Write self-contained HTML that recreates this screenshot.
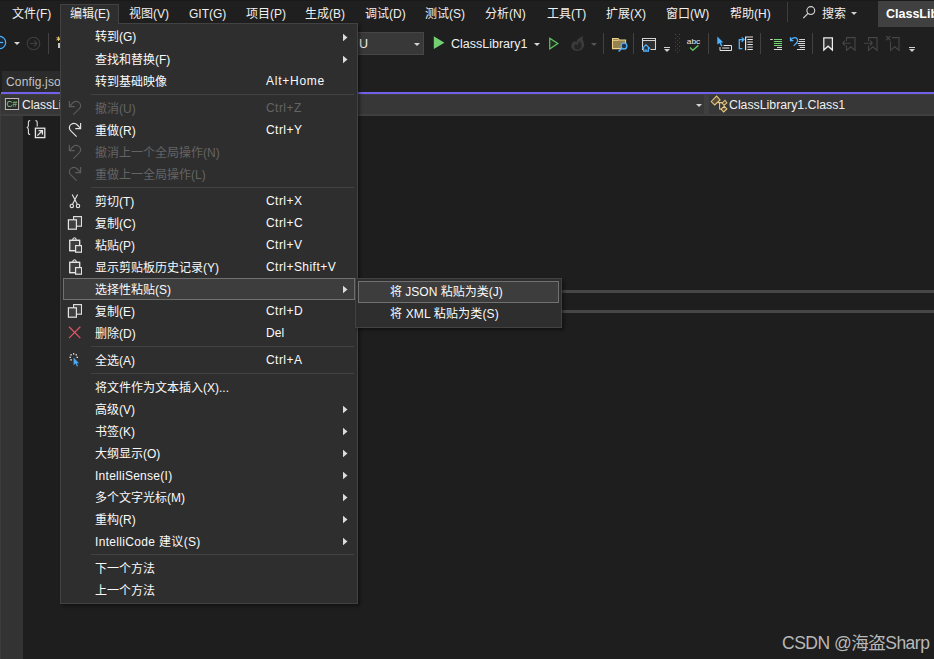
<!DOCTYPE html>
<html lang="zh-CN">
<head>
<meta charset="utf-8">
<title>Visual Studio</title>
<style>
html,body{margin:0;padding:0;}
body{width:934px;height:659px;overflow:hidden;background:#1f1f1f;position:relative;
  font-family:"Liberation Sans","Noto Sans CJK SC",sans-serif;font-size:12px;color:#fafafa;}
.abs{position:absolute;}
.t{position:absolute;white-space:nowrap;line-height:16px;height:16px;}
/* menubar */
.mb{top:6px;color:#f0f0f0;}
/* popup menu */
.popup{position:absolute;background:#2e2e2e;border:1px solid #424242;box-sizing:border-box;
  box-shadow:2px 2px 3px rgba(0,0,0,.42);}
.row{position:absolute;left:2px;height:22px;box-sizing:border-box;}
.row .lbl{position:absolute;left:32px;top:4px;line-height:16px;white-space:nowrap;}
.row .sc{position:absolute;left:203px;top:3px;line-height:16px;white-space:nowrap;letter-spacing:0.45px;}
.row .ar{position:absolute;left:280px;top:7px;width:5px;height:9px;background:#dcdcdc;
  clip-path:polygon(0 7.5%,90% 50%,0 92.5%);}
.row.dis{color:#646464;}
.row .ico{color:#e4e4e4;}
.row.dis .ico{color:#5c5c5c;}
.row.hot{background:#3d3d3d;border:1px solid #707070;}
.row.hot .lbl{left:31px;top:3px;}
.row.hot .ar{left:279px;top:6px;}
.sep{position:absolute;left:30px;right:3px;height:1px;background:#424242;}
.ico{position:absolute;left:3px;top:3px;width:16px;height:16px;}
.vsep{position:absolute;width:1px;background:#424242;top:33px;height:21px;}
</style>
</head>
<body>
<!-- ===== menu bar ===== -->
<div id="menubar" class="abs" style="left:0;top:0;width:934px;height:28px;background:#1f1f1f;"></div>
<div class="abs" style="left:0;top:0;width:934px;height:1px;background:#1a1a1a;"></div>
<span class="t mb" style="left:12px;">文件(F)</span>
<span class="t mb" style="left:129px;">视图(V)</span>
<span class="t mb" style="left:189px;">GIT(G)</span>
<span class="t mb" style="left:246px;">项目(P)</span>
<span class="t mb" style="left:305px;">生成(B)</span>
<span class="t mb" style="left:365px;">调试(D)</span>
<span class="t mb" style="left:425px;">测试(S)</span>
<span class="t mb" style="left:485px;">分析(N)</span>
<span class="t mb" style="left:547px;">工具(T)</span>
<span class="t mb" style="left:606px;">扩展(X)</span>
<span class="t mb" style="left:666px;">窗口(W)</span>
<span class="t mb" style="left:730px;">帮助(H)</span>
<div class="abs" style="left:787px;top:2px;width:1px;height:20px;background:#3d3d3d;"></div>
<svg class="abs" style="left:802px;top:5px;" width="16" height="16" viewBox="0 0 16 16"><circle cx="8.8" cy="5.6" r="3.9" fill="none" stroke="#d4d4d4" stroke-width="1.15"/><path d="M6 8.4 L1.3 13.1" stroke="#d4d4d4" stroke-width="1.3" fill="none"/></svg>
<span class="t mb" style="left:822px;">搜索</span>
<div class="abs" style="left:851px;top:12px;width:0;height:0;border-top:3px solid #d0d0d0;border-left:3px solid transparent;border-right:3px solid transparent;"></div>
<div class="abs" style="left:878px;top:1px;width:56px;height:26px;background:#404040;"></div>
<span class="t" style="left:886px;top:6px;font-weight:bold;font-size:12.5px;color:#fff;">ClassLibrary1</span>

<!-- ===== toolbar ===== -->
<div id="toolbar">
<!-- back / forward -->
<svg class="abs" style="left:-10px;top:35px;" width="18" height="18" viewBox="0 0 18 18"><circle cx="9.5" cy="7.5" r="6.2" fill="#1c2935" stroke="#4db2ff" stroke-width="1.2"/><path d="M5 7.5 H13.2" stroke="#4db2ff" stroke-width="1.2" fill="none"/></svg>
<div class="abs" style="left:14px;top:42px;width:0;height:0;border-top:3px solid #d6d6d6;border-left:3px solid transparent;border-right:3px solid transparent;"></div>
<svg class="abs" style="left:26px;top:36px;" width="16" height="16" viewBox="0 0 16 16"><circle cx="7.5" cy="7.5" r="6.3" fill="none" stroke="#3f3f3f" stroke-width="1.1"/><path d="M4 7.5 H11 M11 7.5 L8.2 4.7 M11 7.5 L8.2 10.3" stroke="#3f3f3f" stroke-width="1.1" fill="none"/></svg>
<div class="vsep" style="left:48px;"></div>
<svg class="abs" style="left:56px;top:36px;" width="8" height="14" viewBox="0 0 8 14"><path d="M2.5 0.5 V5 M0.5 1.5 L4.5 4 M0.5 4 L4.5 1.5" stroke="#e8c66b" stroke-width="1" fill="none"/><rect x="2" y="7" width="3" height="5" fill="#c8c8c8"/></svg>
<!-- platform combo -->
<div class="abs" style="left:300px;top:32px;width:124px;height:23px;background:#383838;border:1px solid #464646;box-sizing:border-box;"></div>
<span class="t" style="left:359px;top:36px;font-size:12.5px;color:#f0f0f0;">U</span>
<div class="abs" style="left:414px;top:43px;width:0;height:0;border-top:3px solid #d6d6d6;border-left:3px solid transparent;border-right:3px solid transparent;"></div>
<!-- start -->
<svg class="abs" style="left:432px;top:35px;" width="14" height="16" viewBox="0 0 14 16"><path d="M1.8 1.3 L12.4 7.7 L1.8 14.1 Z" fill="#72d072"/></svg>
<span class="t" id="tb-proj" style="left:451px;top:36px;font-size:12.5px;color:#f0f0f0;">ClassLibrary1</span>
<div class="abs" style="left:534px;top:43px;width:0;height:0;border-top:3px solid #d6d6d6;border-left:3px solid transparent;border-right:3px solid transparent;"></div>
<svg class="abs" style="left:546px;top:36px;" width="16" height="16" viewBox="0 0 16 16"><path d="M3.75 2.2 L11.9 7.5 L3.75 12.9 Z" fill="#223022" stroke="#68cf68" stroke-width="1.1" stroke-linejoin="miter"/></svg>
<svg class="abs" style="left:569px;top:35px;" width="17" height="17" viewBox="0 0 17 17"><path d="M14.7 0.4 C12 1.5 10 3 8.5 4.6 C7.8 5.6 7.4 6.6 7.6 7.6 C6.6 7.2 6 6.6 5.6 5.8 C3.6 7.4 2.2 9 2.2 11 C2.2 13.8 4.8 16 8.3 16 C12 16 15.2 13.4 15.2 9.6 C15.2 7 13.6 5.2 13.6 3.4 C13.6 2.2 14 1.2 14.7 0.4 Z" fill="#3b3b3b"/><path d="M8.6 14.8 C6.6 14.8 5.2 13.4 5.2 11.7 C5.2 10.4 5.9 9.5 6.6 8.8 C7.2 9.6 8 10 8.9 10 C8.9 8.4 9.8 7 11.2 6 C11.4 7.8 12.6 9 12.6 11 C12.6 13.2 10.8 14.8 8.6 14.8 Z" fill="#252525"/></svg>
<div class="abs" style="left:591px;top:43px;width:0;height:0;border-top:3px solid #555;border-left:3px solid transparent;border-right:3px solid transparent;"></div>
<div class="vsep" style="left:603px;"></div>
<!-- folder search -->
<svg class="abs" style="left:611px;top:36px;" width="18" height="17" viewBox="0 0 18 17"><path d="M1.5 2.5 H7 L8.3 3.9 H14.6 V12.6 H1.5 Z" fill="#96824f" stroke="#efd289" stroke-width="1.05"/><path d="M1.5 4.4 H7.6" stroke="#efd289" stroke-width="0.9"/><circle cx="13" cy="10" r="2.9" fill="#27323d" stroke="#4db2ff" stroke-width="1.3"/><path d="M11 12 L7.6 15.5" stroke="#4db2ff" stroke-width="1.4"/></svg>
<div class="vsep" style="left:633px;"></div>
<!-- window home -->
<svg class="abs" style="left:640px;top:36px;" width="18" height="17" viewBox="0 0 18 17"><rect x="3" y="5" width="12" height="8.5" fill="#303030"/><path d="M3 13.5 H2.5 V2.5 H15.5 V13.5 H10.5" fill="none" stroke="#d4d4d4" stroke-width="1.05"/><path d="M2.5 4.5 H15.5" stroke="#d4d4d4" stroke-width="1"/><path d="M3.6 11.6 V15.2 H8.4 V11.6 Z" fill="#24303b"/><path d="M2 12.6 L6 8.9 L10 12.6 M3.6 11.6 V15.2 H8.4 V11.6 M6 15.2 V13.2" fill="none" stroke="#4db2ff" stroke-width="1.25"/></svg>
<div class="abs" style="left:664px;top:47px;width:6px;height:1px;background:#d0d0d0;"></div>
<div class="abs" style="left:664px;top:49px;width:0;height:0;border-top:3px solid #d0d0d0;border-left:3px solid transparent;border-right:3px solid transparent;"></div>
<svg class="abs" style="left:674px;top:33px;" width="7" height="21" viewBox="0 0 7 21"><g fill="#4c4c4c"><rect x="1" y="1.00" width="1" height="1"/><rect x="5" y="1.00" width="1" height="1"/><rect x="3" y="2.97" width="1" height="1"/><rect x="1" y="4.94" width="1" height="1"/><rect x="5" y="4.94" width="1" height="1"/><rect x="3" y="6.91" width="1" height="1"/><rect x="1" y="8.88" width="1" height="1"/><rect x="5" y="8.88" width="1" height="1"/><rect x="3" y="10.85" width="1" height="1"/><rect x="1" y="12.82" width="1" height="1"/><rect x="5" y="12.82" width="1" height="1"/><rect x="3" y="14.79" width="1" height="1"/><rect x="1" y="16.76" width="1" height="1"/><rect x="5" y="16.76" width="1" height="1"/><rect x="3" y="18.73" width="1" height="1"/></g></svg>
<!-- abc check -->
<svg class="abs" style="left:685px;top:35px;" width="18" height="18" viewBox="0 0 18 18"><text x="1.8" y="8.9" font-family="Liberation Sans, sans-serif" font-size="7.4" fill="#ececec" textLength="13.4" lengthAdjust="spacingAndGlyphs">abc</text><path d="M5 12.6 L7.8 15.2 L13.4 10.4" fill="none" stroke="#5fc05f" stroke-width="1.4"/></svg>
<div class="vsep" style="left:708px;"></div>
<!-- cursor rect -->
<svg class="abs" style="left:715px;top:35px;" width="19" height="18" viewBox="0 0 19 18"><path d="M2.3 1.6 V9.6 L4.4 8 L6.2 11.6 L7.6 10.9 L5.8 7.6 H8.4 Z" fill="#4db2ff"/><path d="M8.6 10.5 H16.5 V15.5 H5 V12" fill="none" stroke="#e4e4e4" stroke-width="1"/><path d="M7.2 13 H14.4" stroke="#e4e4e4" stroke-width="1"/></svg>
<!-- doc arrow -->
<svg class="abs" style="left:737px;top:35px;" width="19" height="18" viewBox="0 0 19 18"><path d="M5.4 13.7 H2.3 V4.6 H6.4 M4.7 2.4 L6.9 4.6 L4.7 6.8" fill="none" stroke="#4db2ff" stroke-width="1.3"/><path d="M8.6 15.2 V2 H16" fill="none" stroke="#e4e4e4" stroke-width="1.2"/><path d="M10.4 4.5 H15.8 M10.4 7 H15.8 M10.4 9.5 H15.8 M10.4 12 H15.8 M10.4 14.5 H15.8" stroke="#e4e4e4" stroke-width="1"/></svg>
<div class="vsep" style="left:760px;"></div>
<!-- comment / uncomment -->
<svg class="abs" style="left:768px;top:36px;" width="17" height="16" viewBox="0 0 17 16"><path d="M2.2 3.5 H4.8 M9 11.5 H14 M5.9 13.5 H14" stroke="#d8d8d8" stroke-width="1"/><path d="M5.9 3.5 H14 M5.9 5.5 H14 M5.9 7.5 H14 M5.9 9.5 H14" stroke="#76d676" stroke-width="1"/></svg>
<svg class="abs" style="left:788px;top:35px;" width="19" height="18" viewBox="0 0 19 18"><path d="M2.5 2.2 V5.5 H5.4 M2.7 5.3 C3.9 2.8 7.3 1.9 9 3.7 C10.4 5.3 9.5 7.6 5.7 10.9" fill="none" stroke="#4db2ff" stroke-width="1.25"/><path d="M11.2 4.5 H17 M10.6 6.5 H17 M9.6 8.5 H17 M10.6 10.5 H17 M11.8 12.5 H17 M9 14.5 H17" stroke="#d4d4d4" stroke-width="1"/></svg>
<div class="vsep" style="left:812px;"></div>
<!-- bookmarks -->
<svg class="abs" style="left:821px;top:36px;" width="14" height="17" viewBox="0 0 14 17"><path d="M2.8 1.9 H11.4 V14 L7.1 10.2 L2.8 14 Z" fill="#303030" stroke="#ececec" stroke-width="1.25"/></svg>
<svg class="abs" style="left:841px;top:36px;" width="16" height="17" viewBox="0 0 16 17"><path d="M5.5 5 V1.6 H14 V14.4 L9.8 10.8 L5.5 14.4 V9.5" fill="none" stroke="#464646" stroke-width="1.1"/><path d="M9.5 7.2 H1.5 M1.5 7.2 L4 4.7 M1.5 7.2 L4 9.7" fill="none" stroke="#464646" stroke-width="1.1"/></svg>
<svg class="abs" style="left:863px;top:36px;" width="16" height="17" viewBox="0 0 16 17"><path d="M5.5 5 V1.6 H14 V14.4 L9.8 10.8 L5.5 14.4 V9.5" fill="none" stroke="#464646" stroke-width="1.1"/><path d="M1 7.2 H9.5 M9.5 7.2 L7 4.7 M9.5 7.2 L7 9.7" fill="none" stroke="#464646" stroke-width="1.1"/></svg>
<svg class="abs" style="left:885px;top:35px;" width="16" height="18" viewBox="0 0 16 18"><path d="M7 2.6 H14 V15.4 L9.8 11.8 L5.5 15.4 V6.5" fill="none" stroke="#464646" stroke-width="1.1"/><path d="M1 1 L5.4 5.4 M5.4 1 L1 5.4" stroke="#464646" stroke-width="1.1"/></svg>
<div class="abs" style="left:909px;top:47px;width:6px;height:1px;background:#d0d0d0;"></div>
<div class="abs" style="left:909px;top:49px;width:0;height:0;border-top:3px solid #d0d0d0;border-left:3px solid transparent;border-right:3px solid transparent;"></div>
</div>

<!-- ===== tabs / nav ===== -->
<div id="tabs">
<div class="abs" style="left:2px;top:71px;width:120px;height:22px;background:#2b2b2b;"></div>
<span class="t" style="left:6px;top:74px;color:#c4c4c4;letter-spacing:0.15px;">Config.json</span>
<div class="abs" style="left:1px;top:92px;width:933px;height:2px;background:#7160e8;"></div>
<div class="abs" style="left:0;top:94px;width:934px;height:22px;background:#3f3f3f;"></div>
<div class="abs" style="left:1px;top:95px;width:703px;height:19px;background:#373737;"></div>
<div class="abs" style="left:709px;top:95px;width:225px;height:19px;background:#373737;"></div>
<svg class="abs" style="left:4px;top:97px;" width="16" height="14" viewBox="0 0 16 14"><rect x="1.4" y="1.5" width="13.2" height="11" fill="#2a2a2a" stroke="#bdbdbd" stroke-width="1"/><text x="2.6" y="10" font-family="Liberation Sans, sans-serif" font-size="8.5" fill="#7fd87f" textLength="10.6" lengthAdjust="spacingAndGlyphs">C#</text></svg>
<span class="t" style="left:22px;top:97px;font-size:12px;color:#f0f0f0;">ClassLibrary1</span>
<div class="abs" style="left:696px;top:104px;width:0;height:0;border-top:3px solid #d6d6d6;border-left:3px solid transparent;border-right:3px solid transparent;"></div>
<svg class="abs" style="left:710px;top:95px;" width="19" height="18" viewBox="0 0 19 18"><g fill="#5a4e36" stroke="#ecc983" stroke-width="1.05" stroke-linejoin="miter"><path d="M1.2 6.5 L6.6 1.1 L10.1 4.9 L4.7 10 Z"/><path d="M12.1 8.1 L15 5.2 L16.9 7.8 L14 10.3 Z"/><path d="M11.1 14.2 L14.3 11.3 L16.9 13.9 L13.7 17 Z"/><path d="M7.7 7.6 H12.2 M9.6 7.6 V13.9 H11.3" fill="none"/></g></svg>
<span class="t" id="nav-cls" style="left:729px;top:97px;font-size:12.3px;color:#f0f0f0;">ClassLibrary1.Class1</span>
</div>

<!-- ===== editor ===== -->
<div id="editor">
<div class="abs" style="left:0;top:116px;width:934px;height:543px;background:#1e1e1e;"></div>
<div class="abs" style="left:0;top:116px;width:23px;height:543px;background:#333333;"></div>
<div class="abs" style="left:0;top:116px;width:1px;height:543px;background:#3d3d3d;"></div>
<div class="abs" style="left:562px;top:290px;width:372px;height:3px;background:#464646;"></div>
<div class="abs" style="left:562px;top:310px;width:372px;height:3px;background:#464646;"></div>
<svg class="abs" style="left:25px;top:118px;" width="22" height="22" viewBox="0 0 22 22"><path d="M5.2 2.5 C3.7 2.5 3.4 3.4 3.4 4.6 V7.4 C3.4 8.6 2.9 9.3 1.8 9.5 C2.9 9.7 3.4 10.4 3.4 11.6 V14.4 C3.4 15.6 3.7 16.5 5.2 16.5" fill="none" stroke="#dcdcdc" stroke-width="1.1"/><path d="M10.4 2.5 C11.9 2.5 12.2 3.4 12.2 4.6 V8.5" fill="none" stroke="#dcdcdc" stroke-width="1.1"/><rect x="10.4" y="10.2" width="9.4" height="9.4" fill="#2a2a2a" stroke="#e6e6e6" stroke-width="1.3"/><path d="M12.4 17.6 L17.2 12.8 M13.6 12.6 H17.4 V16.4" fill="none" stroke="#e6e6e6" stroke-width="1.3"/></svg>
</div>

<!-- ===== edit menu header tab ===== -->
<div class="abs" style="left:60px;top:4px;width:59px;height:21px;background:#2e2e2e;border:1px solid #424242;border-bottom:none;box-sizing:border-box;"></div>
<span class="t mb" style="left:70px;">编辑(E)</span>

<!-- ===== edit popup ===== -->
<div id="editmenu" class="popup" style="left:60px;top:23px;width:298px;height:581px;">
<div class="row" style="top:2px;width:292px;"><span class="lbl" style="top:3px;">转到(G)</span><i class="ar"></i></div>
<div class="row" style="top:24px;width:292px;"><span class="lbl">查找和替换(F)</span><i class="ar"></i></div>
<div class="row" style="top:46px;width:292px;"><span class="lbl">转到基础映像</span><span class="sc" style="letter-spacing:0.75px;">Alt+Home</span></div>
<div class="sep" style="top:70px;"></div>
<div class="row dis" style="top:73px;width:292px;"><svg class="ico" viewBox="0 0 16 16"><path d="M7.4 14.6 L13.4 8.6 C15.2 6.7 15 3.9 12.9 2.4 C10.9 1 8.3 1.3 6.7 3 L3.7 6.2 M3.4 0.9 V6.6 H8.7" fill="none" stroke="currentColor" stroke-width="1.15"/></svg><span class="lbl">撤消(U)</span><span class="sc">Ctrl+Z</span></div>
<div class="row" style="top:95px;width:292px;"><svg class="ico" viewBox="0 0 16 16"><path d="M10.6 14.6 L4.6 8.6 C2.8 6.7 3 3.9 5.1 2.4 C7.1 1 9.7 1.3 11.3 3 L14.3 6.2 M14.6 0.9 V6.6 H9.3" fill="none" stroke="currentColor" stroke-width="1.15"/></svg><span class="lbl">重做(R)</span><span class="sc">Ctrl+Y</span></div>
<div class="row dis" style="top:117px;width:292px;"><svg class="ico" viewBox="0 0 16 16"><path d="M7.4 14.6 L13.4 8.6 C15.2 6.7 15 3.9 12.9 2.4 C10.9 1 8.3 1.3 6.7 3 L3.7 6.2 M3.4 0.9 V6.6 H8.7" fill="none" stroke="currentColor" stroke-width="1.15"/></svg><span class="lbl">撤消上一个全局操作(N)</span></div>
<div class="row dis" style="top:139px;width:292px;"><svg class="ico" viewBox="0 0 16 16"><path d="M10.6 14.6 L4.6 8.6 C2.8 6.7 3 3.9 5.1 2.4 C7.1 1 9.7 1.3 11.3 3 L14.3 6.2 M14.6 0.9 V6.6 H9.3" fill="none" stroke="currentColor" stroke-width="1.15"/></svg><span class="lbl">重做上一全局操作(L)</span></div>
<div class="sep" style="top:163px;"></div>
<div class="row" style="top:166px;width:292px;"><svg class="ico" viewBox="0 0 16 16"><path d="M6.2 1.4 L11.4 11.4 M11.6 1.4 L6.4 11.4" fill="none" stroke="currentColor" stroke-width="1.1"/><circle cx="5.8" cy="12.9" r="1.7" fill="none" stroke="currentColor" stroke-width="1.1"/><circle cx="12" cy="12.9" r="1.7" fill="none" stroke="currentColor" stroke-width="1.1"/></svg><span class="lbl">剪切(T)</span><span class="sc">Ctrl+X</span></div>
<div class="row" style="top:188px;width:292px;"><svg class="ico" viewBox="0 0 16 16"><rect x="7.6" y="1.6" width="7.9" height="9.6" fill="#404040" stroke="currentColor" stroke-width="1.1"/><rect x="2.4" y="4.8" width="8" height="9.4" fill="#404040" stroke="currentColor" stroke-width="1.2"/></svg><span class="lbl">复制(C)</span><span class="sc">Ctrl+C</span></div>
<div class="row" style="top:210px;width:292px;"><svg class="ico" viewBox="0 0 16 16"><path d="M6.5 3.3 C6.8 1.6 7.6 0.8 8.5 0.8 C9.4 0.8 10.2 1.6 10.5 3.3" fill="#404040" stroke="currentColor" stroke-width="1.1"/><path d="M9 13.6 H3.8 V3.3 H13.6 V8" fill="#404040" stroke="currentColor" stroke-width="1.2"/><rect x="3.8" y="3.3" width="9.8" height="10" fill="#404040" stroke="none"/><path d="M9 13.6 H3.8 V3.3 H13.6 V8" fill="none" stroke="currentColor" stroke-width="1.2"/><rect x="9.6" y="8.6" width="6" height="6.6" fill="#404040" stroke="currentColor" stroke-width="1.2"/></svg><span class="lbl">粘贴(P)</span><span class="sc">Ctrl+V</span></div>
<div class="row" style="top:232px;width:292px;"><svg class="ico" viewBox="0 0 16 16"><path d="M6.5 3.3 C6.8 1.6 7.6 0.8 8.5 0.8 C9.4 0.8 10.2 1.6 10.5 3.3" fill="#404040" stroke="currentColor" stroke-width="1.1"/><path d="M9 13.6 H3.8 V3.3 H13.6 V8" fill="#404040" stroke="currentColor" stroke-width="1.2"/><rect x="3.8" y="3.3" width="9.8" height="10" fill="#404040" stroke="none"/><path d="M9 13.6 H3.8 V3.3 H13.6 V8" fill="none" stroke="currentColor" stroke-width="1.2"/><rect x="9.6" y="8.6" width="6" height="6.6" fill="#404040" stroke="currentColor" stroke-width="1.2"/></svg><span class="lbl">显示剪贴板历史记录(Y)</span><span class="sc">Ctrl+Shift+V</span></div>
<div class="row hot" style="top:254px;width:292px;"><span class="lbl">选择性粘贴(S)</span><i class="ar"></i></div>
<div class="row" style="top:276px;width:292px;"><svg class="ico" viewBox="0 0 16 16"><rect x="7.6" y="1.6" width="7.9" height="9.6" fill="#404040" stroke="currentColor" stroke-width="1.1"/><rect x="2.4" y="4.8" width="8" height="9.4" fill="#404040" stroke="currentColor" stroke-width="1.2"/></svg><span class="lbl">复制(E)</span><span class="sc">Ctrl+D</span></div>
<div class="row" style="top:298px;width:292px;"><svg class="ico" viewBox="0 0 16 16"><path d="M3 1.8 L14.3 13.1 M14.3 1.8 L3 13.1" fill="none" stroke="#e05566" stroke-width="1.25"/></svg><span class="lbl">删除(D)</span><span class="sc" style="letter-spacing:0.1px;">Del</span></div>
<div class="sep" style="top:322px;"></div>
<div class="row" style="top:325px;width:292px;"><svg class="ico" viewBox="0 0 16 16"><g fill="#ffffff"><rect x="7" y="1.2" width="1.3" height="1.3"/><rect x="9.6" y="2.2" width="1.3" height="1.3"/><rect x="4.4" y="2.2" width="1.3" height="1.3"/><rect x="3.5" y="4.7" width="1.3" height="1.3"/><rect x="10.6" y="4.7" width="1.3" height="1.3"/><rect x="4.4" y="7.2" width="1.3" height="1.3"/></g><path d="M7.6 5.6 V13.2 L9.5 11.6 L10.9 14.6 L12.1 14 L10.7 11.2 H13 Z" fill="#4aa8f5"/></svg><span class="lbl">全选(A)</span><span class="sc">Ctrl+A</span></div>
<div class="sep" style="top:349px;"></div>
<div class="row" style="top:352px;width:292px;"><span class="lbl">将文件作为文本插入(X)...</span></div>
<div class="row" style="top:374px;width:292px;"><span class="lbl">高级(V)</span><i class="ar"></i></div>
<div class="row" style="top:396px;width:292px;"><span class="lbl">书签(K)</span><i class="ar"></i></div>
<div class="row" style="top:418px;width:292px;"><span class="lbl">大纲显示(O)</span><i class="ar"></i></div>
<div class="row" style="top:440px;width:292px;"><span class="lbl" style="letter-spacing:0.27px;">IntelliSense(I)</span><i class="ar"></i></div>
<div class="row" style="top:462px;width:292px;"><span class="lbl">多个文字光标(M)</span><i class="ar"></i></div>
<div class="row" style="top:484px;width:292px;"><span class="lbl">重构(R)</span><i class="ar"></i></div>
<div class="row" style="top:506px;width:292px;"><span class="lbl" style="letter-spacing:0.33px;">IntelliCode 建议(S)</span><i class="ar"></i></div>
<div class="sep" style="top:530px;"></div>
<div class="row" style="top:533px;width:292px;"><span class="lbl">下一个方法</span></div>
<div class="row" style="top:555px;width:292px;"><span class="lbl">上一个方法</span></div>
</div>

<div class="abs" style="left:61px;top:23px;width:57px;height:1px;background:#2e2e2e;"></div>
<!-- ===== submenu ===== -->
<div id="submenu" class="popup" style="left:355px;top:278px;width:207px;height:50px;">
<div class="row hot" style="top:2px;left:2px;width:201px;"><span class="lbl" style="left:31px;top:2px;">将 JSON 粘贴为类(J)</span></div>
<div class="row" style="top:24px;width:201px;"><span class="lbl" style="left:32px;top:3px;letter-spacing:0.15px;">将 XML 粘贴为类(S)</span></div>
</div>

<!-- watermark -->
<span class="abs" style="left:782px;top:633px;font-size:17.5px;letter-spacing:-0.5px;line-height:20px;color:#b8b8b8;white-space:nowrap;">CSDN @海盗Sharp</span>
</body>
</html>
